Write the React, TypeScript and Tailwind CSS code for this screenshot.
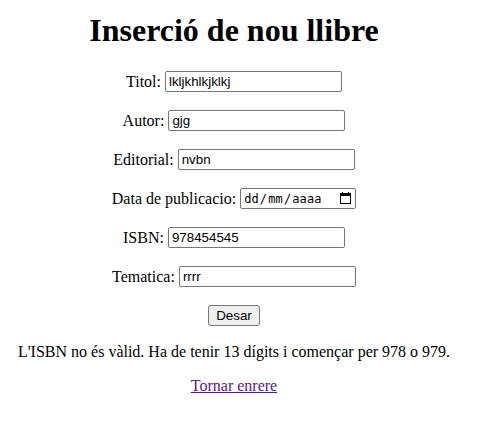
const fields = [
  { label: 'Titol:', value: 'lkljkhlkjklkj' },
  { label: 'Autor:', value: 'gjg' },
  { label: 'Editorial:', value: 'nvbn' },
  { label: 'Data de publicacio:', date: true },
  { label: 'ISBN:', value: '978454545' },
  { label: 'Tematica:', value: 'rrrr' },
];

function DateField() {
  return (
    <div className="flex h-[21px] w-[116px] items-center justify-between rounded-[2px] border border-[#767676] bg-white pl-[3px] pr-[4px]">
      <span className="flex gap-px font-['DejaVu_Sans_Mono',monospace] text-[12px] leading-none tracking-[0.11px]">
        <span>dd</span>
        <span>/</span>
        <span>mm</span>
        <span>/</span>
        <span>aaaa</span>
      </span>
      <svg className="-translate-y-px" width="11" height="12" viewBox="0 0 11 12" shapeRendering="crispEdges">
        <path fill="#000" fillRule="evenodd" d="M0 1h2V0h1v1h5V0h1v1h2v11H0zM1 4v7h9V4z" />
      </svg>
    </div>
  );
}

export default function App() {
  return (
    <main className="h-[444px] w-[493px] overflow-hidden bg-white font-['Liberation_Serif',serif] text-base leading-[18px] text-black">
      <div className="flex w-[468px] flex-col items-center">
        <h1 className="mt-[12px] text-[32px] font-bold leading-[37px]">Inserció de nou llibre</h1>
        <form className="mt-[22px] flex flex-col items-center gap-[18px]">
          {fields.map((f) => (
            <label key={f.label} className="flex h-[21px] items-start gap-1">
              <span className="pt-0.5">{f.label}</span>
              {f.date ? (
                <DateField />
              ) : (
                <input
                  defaultValue={f.value}
                  className="h-[21px] w-[177px] rounded-[2px] border border-[#767676] bg-white px-[3px] font-['Liberation_Sans',sans-serif] text-[13.333px] leading-[15px]"
                />
              )}
            </label>
          ))}
          <button
            type="button"
            className="h-[21px] w-[52px] rounded-[3px] border border-[#767676] bg-[#efefef] font-['Liberation_Sans',sans-serif] text-[13.333px] leading-[15px]"
          >
            Desar
          </button>
        </form>
        <p className="mt-[17px] whitespace-nowrap">L'ISBN no és vàlid. Ha de tenir 13 dígits i començar per 978 o 979.</p>
        <a href="#" className="mt-4 text-[#551a8b] underline">Tornar enrere</a>
      </div>
    </main>
  );
}
